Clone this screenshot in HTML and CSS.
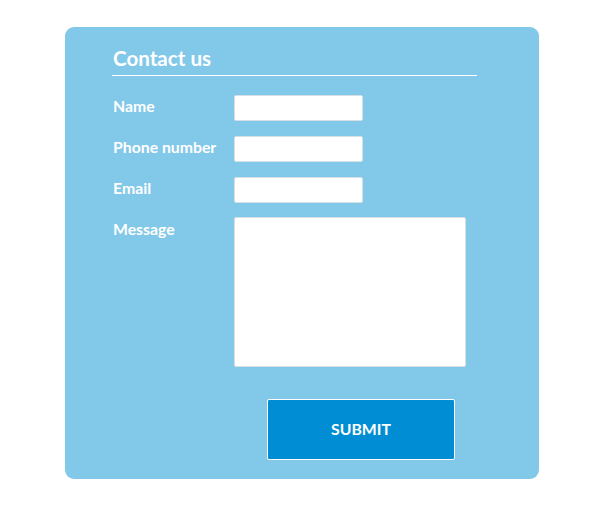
FILE: index.html
```html
<!DOCTYPE html>
<html>
<head>
<meta charset="utf-8">
<link rel="stylesheet" href="styles.css">
</head>
<body>
<form class="card">
  <h2 class="title">Contact us</h2>
  <div class="fields">
    <label class="label">Name</label>
    <input class="input" type="text">
    <label class="label">Phone number</label>
    <input class="input" type="text">
    <label class="label">Email</label>
    <input class="input" type="text">
    <label class="label">Message</label>
    <textarea class="textarea"></textarea>
  </div>
  <button class="submit" type="button">SUBMIT</button>
</form>
</body>
</html>
```
FILE: styles.css
```css
html, body {
  margin: 0;
  padding: 0;
  background: #ffffff;
}
body {
  font-family: Lato, "Open Sans", sans-serif;
  padding: 27px 0 0 65px;
}
.card {
  box-sizing: border-box;
  width: 474px;
  height: 452px;
  background: #82c8e9;
  border-radius: 9px;
  padding: 18px 0 0 47px;
  display: flex;
  flex-direction: column;
}
.title {
  margin: 0;
  width: 365px;
  font-size: 20.6px;
  line-height: 26px;
  font-weight: 700;
  color: #ffffff;
  padding-left: 1px;
  padding-bottom: 4px;
  border-bottom: 1px solid #ffffff;
  box-sizing: border-box;
}
.fields {
  margin-top: 19px;
  display: grid;
  grid-template-columns: 122px auto;
  row-gap: 15px;
  align-items: start;
}
.label {
  color: #ffffff;
  font-weight: 700;
  font-size: 15.8px;
  line-height: 20px;
  padding-top: 1px;
  padding-left: 1px;
}
.input, .textarea {
  box-sizing: border-box;
  margin: 0;
  background: #ffffff;
  border: 1px solid #d6dfe4;
  border-radius: 2px;
  outline: none;
}
.input {
  width: 129px;
  height: 26px;
}
.textarea {
  width: 232px;
  height: 150px;
  margin-top: -1px;
  resize: none;
  display: block;
}
.submit {
  box-sizing: border-box;
  margin: 32px 0 0 155px;
  width: 188px;
  height: 61px;
  background: #008dd4;
  border: 1px solid #ffffff;
  border-radius: 2px;
  color: #ffffff;
  font-family: Lato, sans-serif;
  font-weight: 700;
  font-size: 15.8px;
  padding: 0 0 3px 0;
}
```
